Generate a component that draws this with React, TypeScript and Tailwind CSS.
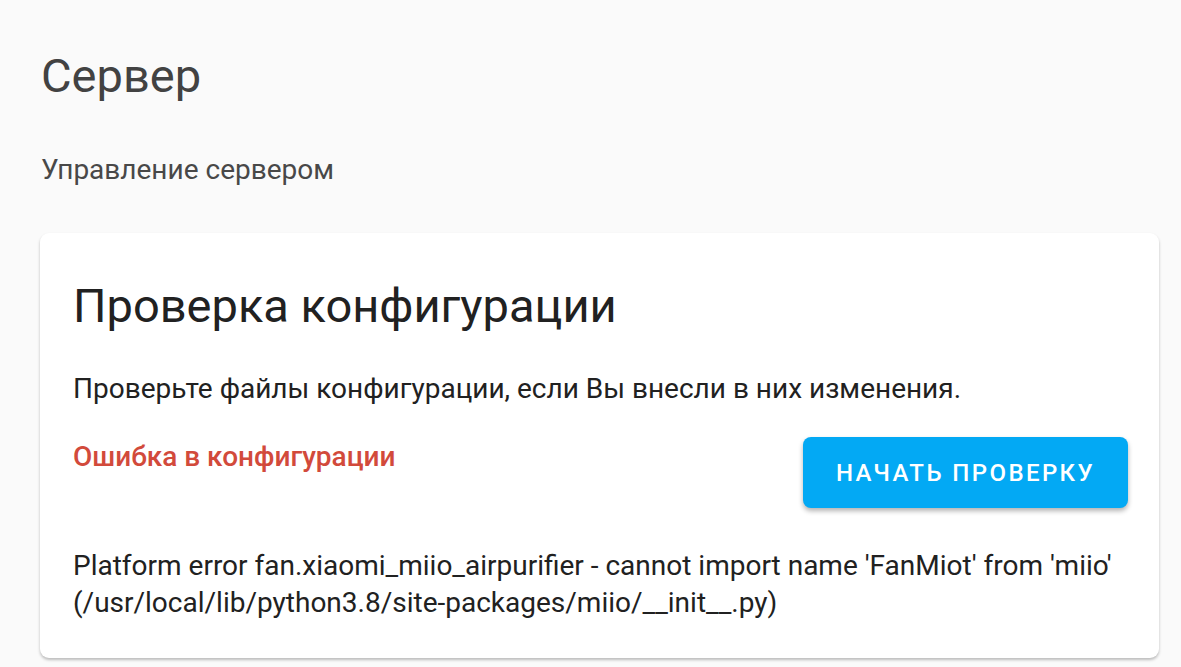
export default function App() {
  return (
    <div
      className="min-h-screen bg-[#fafafa] px-[40px] pt-[46px]"
      style={{ fontFamily: "Roboto, 'Noto Sans', sans-serif" }}
    >
      {/* Заголовок страницы */}
      <h1 className="text-[47px] leading-[60px] font-normal text-[#424242] pl-[1px]">
        Сервер
      </h1>
      <p className="mt-[48px] text-[28px] leading-[32px] text-[#484848] pl-[1px]">
        Управление сервером
      </p>

      {/* Карточка проверки */}
      <div className="mt-[47px] w-[1119px] rounded-[9px] bg-white px-[33px] pt-[43px] pb-[37px] shadow-[0_2px_3px_rgba(0,0,0,0.25)]">
        <h2 className="text-[47px] leading-[60px] font-normal text-[#212121]">
          Проверка конфигурации
        </h2>
        <p className="mt-[37px] text-[28px] leading-[32px] text-[#212121]">
          Проверьте файлы конфигурации, если Вы внесли в них изменения.
        </p>
        <div className="mt-[32px] flex items-start justify-between">
          <span className="mt-[4px] text-[28px] leading-[32px] font-medium text-[#d24a3b]">
            Ошибка в конфигурации
          </span>
          <button className="h-[71px] w-[325px] rounded-[8px] bg-[#03a9f4] text-[24px] font-medium uppercase tracking-[2.4px] text-white shadow-[0_3px_5px_rgba(0,0,0,0.3)] mr-[-2px]">
            Начать проверку
          </button>
        </div>
        <p className="mt-[39px] text-[28px] leading-[37px] text-[#212121]">
          Platform error fan.xiaomi_miio_airpurifier - cannot import name 'FanMiot' from 'miio'
          (/usr/local/lib/python3.8/site-packages/miio/__init__.py)
        </p>
      </div>
    </div>
  );
}
